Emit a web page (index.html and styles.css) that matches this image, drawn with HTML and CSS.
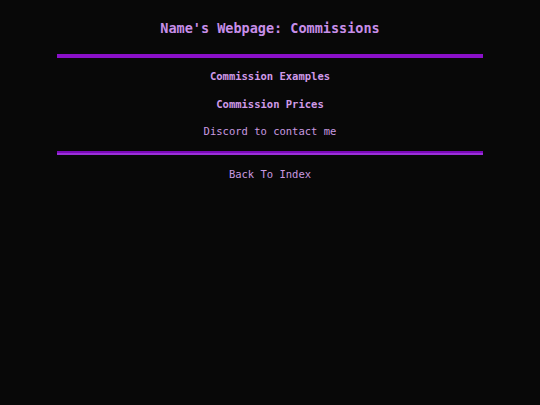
FILE: index.html
```html
<!DOCTYPE html>
<html lang="en">
<head>
  <meta charset="UTF-8">
  <title>Name's Webpage: Commissions</title>
  <link rel="stylesheet" href="styles.css">
</head>
<body>
  <header class="page-header">
    <h1>Name's Webpage: Commissions</h1>
  </header>

  <hr class="rule rule-top">

  <!-- Commission links -->
  <div class="commission-list">
    <p class="item bold">Commission Examples</p>
    <p class="item bold">Commission Prices</p>
    <p class="item">Discord to contact me</p>
  </div>

  <hr class="rule rule-bottom">

  <p class="back-link">Back To Index</p>
</body>
</html>
```

FILE: styles.css
```css
body {
  font-family: "DejaVu Sans Mono", monospace;
  background-color: #080808;
  color: #c99ae0;
  margin: 0;
  padding: 0;
  display: flex;
  flex-direction: column;
  align-items: center;
}

.page-header h1 {
  margin: 19px 0 0 0;
  font-size: 13.5px;
  line-height: 18px;
  color: #c78ee8;
}

.rule {
  width: 426px;
  margin: 0;
  border: none;
}

.rule-top {
  margin-top: 17px;
  height: 4px;
  background-color: #8a10c8;
}

.rule-bottom {
  height: 0;
  border-top: 2px solid #7a08b8;
  border-bottom: 2px solid #9a30d8;
}

.commission-list {
  display: flex;
  flex-direction: column;
  align-items: center;
  padding-top: 11px;
  gap: 13.5px;
  margin-bottom: 13px;
}

.item {
  margin: 0;
  font-size: 10.5px;
  line-height: 14px;
}

.item.bold {
  font-weight: bold;
  color: #d09ae8;
}

.back-link {
  margin: 12px 0 0 0;
  font-size: 10.5px;
  line-height: 14px;
}
```
